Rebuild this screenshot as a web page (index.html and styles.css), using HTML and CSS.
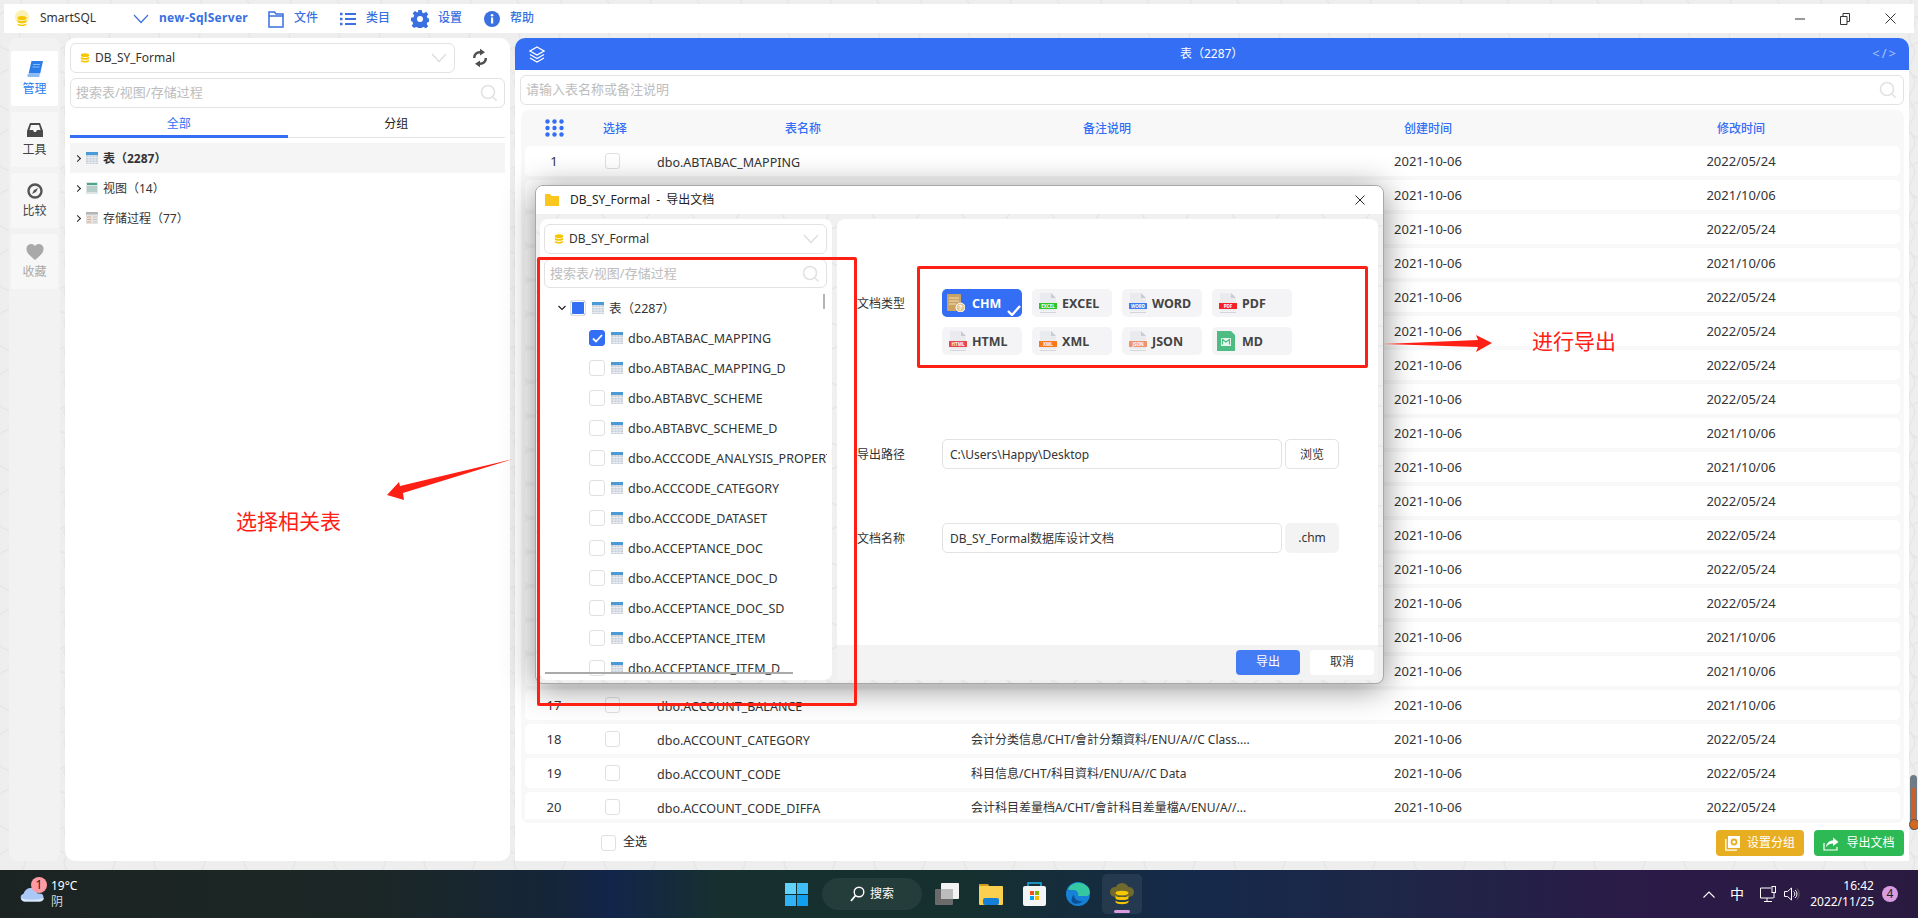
FILE: index.html
```html
<!DOCTYPE html>
<html lang="zh-CN">
<head>
<meta charset="utf-8">
<title>SmartSQL</title>
<link rel="stylesheet" href="styles.css">
</head>
<body>
<svg class="defs" width="0" height="0" aria-hidden="true">
  <defs>
    <symbol id="tbl" viewBox="0 0 12 12"><rect width="12" height="12" fill="#c8d0da"/><rect width="12" height="3" fill="#4a9ad6"/><path d="M0 5.500h12M0 8h12M0 10.500h12M3 3v9M6 3v9M9 3v9" stroke="#f2f4f6" stroke-width=".7"/></symbol>
    <symbol id="view" viewBox="0 0 12 12"><rect width="12" height="12" fill="#dfe5e5"/><rect x="1" y="1" width="10" height="2" fill="#4aa58a"/><path d="M1 5h10M1 7h10M1 9h10" stroke="#8fb8ac" stroke-width="1"/></symbol>
    <symbol id="proc" viewBox="0 0 12 12"><rect width="12" height="12" fill="#e4e4e4"/><rect width="12" height="2.500" fill="#b5b5b5"/><path d="M1 5h4M1 7.500h4M1 10h4" stroke="#e3a87c"/><path d="M7 5h4M7 7.500h4M7 10h4" stroke="#c9c9c9"/></symbol>
    <symbol id="db" viewBox="0 0 12 12"><ellipse cx="6" cy="2.600" rx="5" ry="2.200" fill="#f7c600"/><path d="M1 4.600c1 1.800 9 1.800 10 0v2.200c-1 1.800-9 1.800-10 0zM1 8.200c1 1.800 9 1.800 10 0v1.400c-1 2.400-9 2.400-10 0z" fill="#f7c600"/></symbol>
    <symbol id="chev" viewBox="0 0 16 10"><path d="M1 1l7 7.500L15 1" fill="none" stroke="currentColor" stroke-width="1.200"/></symbol>
    <symbol id="mag" viewBox="0 0 18 18"><circle cx="8" cy="8" r="6.500" fill="none" stroke="#e2e2e2" stroke-width="1.600"/><path d="M13 13l3.500 3.500" stroke="#e2e2e2" stroke-width="1.600"/></symbol>
    <symbol id="sheet" viewBox="0 0 22 22"><path d="M3 1h11l5 5v13H3z" fill="#e9ebef"/><path d="M14 1l5 5h-5z" fill="#c8ccd4"/><rect x="3" y="20" width="16" height="1" fill="#d4d6da"/></symbol>
  </defs>
</svg>

<header class="titlebar">
  <svg class="logo" width="16" height="18" viewBox="0 0 16 18"><circle cx="8" cy="7" r="7" fill="#fbf1b4"/><ellipse cx="8" cy="8" rx="4.500" ry="2" fill="#f7c600"/><path d="M3.500 10c1 1.500 8 1.500 9 0v2c-1 1.500-8 1.500-9 0zM3.500 13.500c1 1.500 8 1.500 9 0v1c-1 2-8 2-9 0z" fill="#f7c600"/></svg>
  <span class="app-name">SmartSQL</span>
  <svg class="t-chev" width="16" height="10"><use href="#chev"/></svg>
  <b class="conn">new-SqlServer</b>
  <nav class="menu">
    <svg class="mi" width="16" height="18" viewBox="0 0 16 18"><path d="M1 2h5.500l1.500 2h7v13H1zM1 6h14" fill="none" stroke="#3a70e0" stroke-width="1.500"/></svg><span class="ml">文件</span>
    <svg class="mi" width="16" height="14" viewBox="0 0 16 14"><path d="M0 2h2.500M0 7h2.500M0 12h2.500" stroke="#3a70e0" stroke-width="2.400"/><path d="M5 2h11M5 7h11M5 12h11" stroke="#3a70e0" stroke-width="2"/></svg><span class="ml">类目</span>
    <svg class="mi gear" width="18" height="18" viewBox="0 0 18 18"><path fill="#3a70e0" fill-rule="evenodd" d="M7.300 0h3.400l.5 2.600 1.700.7 2.200-1.500 2.100 2.500-1.400 2 .6 1.800 2.600.5v3.200l-2.600.5-.7 1.700 1.500 2.200-2.400 2.200-2.100-1.500-1.700.7-.5 2.600H7.300l-.5-2.600-1.700-.7L3 18 .7 15.700l1.500-2.200-.7-1.700L0 11V7.700l2.500-.5.700-1.700-1.500-2.200L4 1l2.200 1.500L7 2zM9 6a3 3 0 100 6 3 3 0 000-6z"/></svg><span class="ml">设置</span>
    <svg class="mi" width="16" height="16" viewBox="0 0 16 16"><circle cx="8" cy="8" r="8" fill="#3a70e0"/><rect x="7" y="6.500" width="2.200" height="6" fill="#fff"/><circle cx="8.100" cy="4.300" r="1.300" fill="#fff"/></svg><span class="ml">帮助</span>
  </nav>
  <div class="winctl">
    <svg width="10" height="10" viewBox="0 0 10 10"><path d="M0 5h10" stroke="#333"/></svg>
    <svg width="10" height="12" viewBox="0 0 10 12"><path d="M.5 3.500h6.500v8H.5zM3 3.500V.5h6.500v8H7" fill="none" stroke="#333"/></svg>
    <svg width="11" height="11" viewBox="0 0 11 11"><path d="M.5.500l10 10M10.500.500l-10 10" stroke="#333"/></svg>
  </div>
</header>

<main class="main">
  <aside class="rail">
    <div class="rail-item active">
      <svg viewBox="0 0 18 18"><path d="M5.500 1H17l-2.800 12.500H2.600z" fill="#2b7de9"/><path d="M2.600 14h11.200l-.5 3H3a1.500 1.500 0 01-.4-3z" fill="#8dbcf4"/><path d="M7 4.500h7M6.500 7h7" stroke="#8dbcf4"/></svg>
      <span>管理</span>
    </div>
    <div class="rail-item">
      <svg viewBox="0 0 18 18"><path d="M4 2h10l3 8v6H1v-6zM5 4 3.500 9H7l1 2h2l1-2h3.500L13 4z" fill="#4a4a4a" fill-rule="evenodd"/></svg>
      <span>工具</span>
    </div>
    <div class="rail-item">
      <svg viewBox="0 0 18 18"><circle cx="9" cy="9" r="6.500" fill="none" stroke="#555" stroke-width="2.400"/><path d="M12 6l-2 4-4 2 2-4z" fill="#555"/></svg>
      <span>比较</span>
    </div>
    <div class="rail-item muted">
      <svg viewBox="0 0 18 18"><path d="M9 17C3 12 .5 9.500.5 6a4.700 4.700 0 018.500-3 4.700 4.700 0 018.500 3c0 3.500-2.500 6-8.500 11z" fill="#a9a9a9"/></svg>
      <span>收藏</span>
    </div>
  </aside>

  <section class="side">
    <div class="side-top">
      <div class="select grow">
        <svg width="10" height="10"><use href="#db"/></svg><span>DB_SY_Formal</span>
        <svg class="sel-chev" width="16" height="10"><use href="#chev"/></svg>
      </div>
      <svg class="refresh" width="16" height="20" viewBox="0 0 16 20"><path d="M2.200 10C2 6.300 5 3.800 8.500 4.200M13.800 10c.2 3.700-2.800 6.200-6.300 5.800" fill="none" stroke="#4f4f4f" stroke-width="2.500"/><path d="M8 0.800l5 3.400-5 3.400zM8 12.400l-5 3.400 5 3.400z" fill="#4f4f4f"/></svg>
    </div>
    <div class="search"><span>搜索表/视图/存储过程</span><svg width="18" height="18"><use href="#mag"/></svg></div>
    <div class="tabs"><span class="tab on">全部</span><span class="tab">分组</span></div>
    <ul class="tree">
      <li class="tree-row hot"><i class="caret"></i><svg width="12" height="12"><use href="#tbl"/></svg><b>表（2287）</b></li>
      <li class="tree-row"><i class="caret"></i><svg width="12" height="12"><use href="#view"/></svg><span>视图（14）</span></li>
      <li class="tree-row"><i class="caret"></i><svg width="12" height="12"><use href="#proc"/></svg><span>存储过程（77）</span></li>
    </ul>
  </section>

  <section class="content">
    <div class="bluebar">
      <svg width="16" height="17" viewBox="0 0 16 17"><path d="M8 1l7 4-7 4-7-4zM1 8.500l7 4 7-4M1 12l7 4 7-4" fill="none" stroke="#fff" stroke-width="1.300"/></svg>
      <span class="bar-title">表（2287）</span>
      <span class="bar-code">&lt;/&gt;</span>
    </div>
    <div class="search table-search"><span>请输入表名称或备注说明</span><svg width="18" height="18"><use href="#mag"/></svg></div>
    <div class="table">
      <div class="thead">
        <svg class="dots" width="19" height="18" viewBox="0 0 19 18"><g fill="#336ef5"><circle cx="2.500" cy="2.500" r="2.200"/><circle cx="9.500" cy="2.500" r="2.200"/><circle cx="16.500" cy="2.500" r="2.200"/><circle cx="2.500" cy="9" r="2.200"/><circle cx="9.500" cy="9" r="2.200"/><circle cx="16.500" cy="9" r="2.200"/><circle cx="2.500" cy="15.500" r="2.200"/><circle cx="9.500" cy="15.500" r="2.200"/><circle cx="16.500" cy="15.500" r="2.200"/></g></svg>
        <span>选择</span><span>表名称</span><span>备注说明</span><span>创建时间</span><span>修改时间</span>
      </div>
      <div class="rows">
        <div class="row"><span>1</span><i class="cb"></i><span class="name">dbo.ABTABAC_MAPPING</span><span class="note"></span><span>2021-10-06</span><span>2022/05/24</span></div>
        <div class="row"><span>2</span><i class="cb"></i><span class="name"></span><span class="note"></span><span>2021-10-06</span><span>2021/10/06</span></div>
        <div class="row"><span>3</span><i class="cb"></i><span class="name"></span><span class="note"></span><span>2021-10-06</span><span>2022/05/24</span></div>
        <div class="row"><span>4</span><i class="cb"></i><span class="name"></span><span class="note"></span><span>2021-10-06</span><span>2021/10/06</span></div>
        <div class="row"><span>5</span><i class="cb"></i><span class="name"></span><span class="note"></span><span>2021-10-06</span><span>2022/05/24</span></div>
        <div class="row"><span>6</span><i class="cb"></i><span class="name"></span><span class="note"></span><span>2021-10-06</span><span>2022/05/24</span></div>
        <div class="row"><span>7</span><i class="cb"></i><span class="name"></span><span class="note"></span><span>2021-10-06</span><span>2022/05/24</span></div>
        <div class="row"><span>8</span><i class="cb"></i><span class="name"></span><span class="note"></span><span>2021-10-06</span><span>2022/05/24</span></div>
        <div class="row"><span>9</span><i class="cb"></i><span class="name"></span><span class="note"></span><span>2021-10-06</span><span>2021/10/06</span></div>
        <div class="row"><span>10</span><i class="cb"></i><span class="name"></span><span class="note"></span><span>2021-10-06</span><span>2021/10/06</span></div>
        <div class="row"><span>11</span><i class="cb"></i><span class="name"></span><span class="note"></span><span>2021-10-06</span><span>2022/05/24</span></div>
        <div class="row"><span>12</span><i class="cb"></i><span class="name"></span><span class="note"></span><span>2021-10-06</span><span>2022/05/24</span></div>
        <div class="row"><span>13</span><i class="cb"></i><span class="name"></span><span class="note"></span><span>2021-10-06</span><span>2022/05/24</span></div>
        <div class="row"><span>14</span><i class="cb"></i><span class="name"></span><span class="note"></span><span>2021-10-06</span><span>2022/05/24</span></div>
        <div class="row"><span>15</span><i class="cb"></i><span class="name"></span><span class="note"></span><span>2021-10-06</span><span>2021/10/06</span></div>
        <div class="row"><span>16</span><i class="cb"></i><span class="name"></span><span class="note"></span><span>2021-10-06</span><span>2021/10/06</span></div>
        <div class="row"><span>17</span><i class="cb"></i><span class="name">dbo.ACCOUNT_BALANCE</span><span class="note"></span><span>2021-10-06</span><span>2021/10/06</span></div>
        <div class="row"><span>18</span><i class="cb"></i><span class="name">dbo.ACCOUNT_CATEGORY</span><span class="note">会计分类信息/CHT/會計分類資料/ENU/A//C Class....</span><span>2021-10-06</span><span>2022/05/24</span></div>
        <div class="row"><span>19</span><i class="cb"></i><span class="name">dbo.ACCOUNT_CODE</span><span class="note">科目信息/CHT/科目資料/ENU/A//C Data</span><span>2021-10-06</span><span>2022/05/24</span></div>
        <div class="row"><span>20</span><i class="cb"></i><span class="name">dbo.ACCOUNT_CODE_DIFFA</span><span class="note">会计科目差量档A/CHT/會計科目差量檔A/ENU/A//...</span><span>2021-10-06</span><span>2022/05/24</span></div>
      </div>
    </div>
    <div class="foot">
      <i class="cb"></i><span class="all">全选</span>
      <button class="act amber"><svg width="15" height="15" viewBox="0 0 15 15"><path d="M.8 3v11.200H12" fill="none" stroke="#fff" stroke-width="1.300"/><rect x="3" y="0" width="12" height="12" fill="#fff"/><circle cx="9" cy="6" r="2.500" fill="none" stroke="#e8ae22" stroke-width="1.800"/></svg>设置分组</button>
      <button class="act green"><svg width="16" height="15" viewBox="0 0 16 15"><path d="M1 7v7h13v-3" fill="none" stroke="#fff" stroke-width="1.200"/><path d="M3 11c.5-4 3.500-6.500 7-6.500V1.500L15.500 6 10 10V7.500C7 7.500 5 8.500 3 11z" fill="#fff"/></svg>导出文档</button>
    </div>
  </section>
</main>

<footer class="taskbar">
  <div class="tb-left">
    <div class="weather-icon">
      <svg width="25" height="15" viewBox="0 0 25 15"><path d="M4.500 14.500a4 4 0 01-1-7.800C5 2 9.500 0 13 1.500c2.500 1 4 3 4.500 5h2a4 4 0 010 8z" fill="#a9c8f5"/><path d="M1 11c5 2 16 2 23 0-.5 2-2 3.500-4.500 3.500h-15C3 14.500 1.500 13 1 11z" fill="#dbe8fc"/></svg>
      <b class="pill-badge">1</b>
    </div>
    <div class="weather-text"><span>19°C</span><span class="dim">阴</span></div>
  </div>
  <div class="tb-center">
    <svg width="23" height="23" viewBox="0 0 23 23"><path d="M0 0h11v11H0z" fill="#63d2fb"/><path d="M12 0h11v11H12z" fill="#3fbdf8"/><path d="M0 12h11v11H0z" fill="#2fb2f6"/><path d="M12 12h11v11H12z" fill="#109eef"/></svg>
    <div class="tb-search"><svg width="15" height="16" viewBox="0 0 15 16"><circle cx="9" cy="6" r="4.800" fill="none" stroke="#fff" stroke-width="1.400"/><path d="M5.500 9.500 1 15" stroke="#fff" stroke-width="1.800"/></svg><span>搜索</span></div>
    <svg class="ti" width="24" height="22" viewBox="0 0 24 22"><rect x="6" width="18" height="16" rx="1" fill="#f3f3f3"/><rect y="6" width="18" height="16" rx="1" fill="#6b6b6b"/><rect x="6" y="6" width="12" height="10" fill="#bdbdbd"/></svg>
    <svg class="ti" width="24" height="22" viewBox="0 0 24 22"><path d="M0 1h9l2 3H0z" fill="#d19c1a"/><rect y="3" width="24" height="19" rx="1" fill="#fbd04e"/><rect x="4" y="15" width="16" height="7" rx="2" fill="#1680d8"/></svg>
    <svg class="ti" width="23" height="24" viewBox="0 0 23 24"><path d="M5 5V1h13v4" fill="none" stroke="#1eb0ec" stroke-width="1.500"/><rect y="4" width="23" height="20" rx="2" fill="#f3f4f4"/><rect x="7" y="9" width="4" height="4" fill="#f25022"/><rect x="12" y="9" width="4" height="4" fill="#7fba00"/><rect x="7" y="14" width="4" height="4" fill="#00a4ef"/><rect x="12" y="14" width="4" height="4" fill="#ffb900"/></svg>
    <svg class="ti" width="24" height="24" viewBox="0 0 24 24"><circle cx="12" cy="12" r="12" fill="#1681d6"/><path d="M2 7C5 0 16-2 22 5c3 4 2 9-1 9H12c1-3-1-6-5-6-2 0-4 0-5-1z" fill="#35c6a2"/><path d="M8 13c0 4 4 7 9 6-3 3-8 4-11 1-1-2 0-6 2-7z" fill="#0c4f96"/></svg>
    <div class="tile">
      <svg width="24" height="24" viewBox="0 0 24 24"><circle cx="12" cy="8" r="7" fill="#716a2d"/><ellipse cx="5" cy="10" rx="5" ry="5" fill="#716a2d"/><ellipse cx="19" cy="10" rx="5" ry="5" fill="#716a2d"/><ellipse cx="12" cy="11" rx="6.500" ry="2.300" fill="#f7c600"/><path d="M5.500 13.500c1 2 12 2 13 0v3c-1 2-12 2-13 0zM5.500 18.500c1 2 12 2 13 0v1.500c-1 3-12 3-13 0z" fill="#f7c600"/></svg>
      <i class="tile-mark"></i>
    </div>
  </div>
  <div class="tb-right">
    <svg width="12" height="7" viewBox="0 0 12 7"><path d="M.5 6.500 6 1l5.500 5.500" fill="none" stroke="#fff" stroke-width="1.100"/></svg>
    <span class="ime">中</span>
    <svg width="17" height="17" viewBox="0 0 17 17"><path d="M11 2H.5v10h13" fill="none" stroke="#fff"/><path d="M4 15.500h8M7 12v3.500" stroke="#fff"/><rect x="12" y=".5" width="3.500" height="6" fill="none" stroke="#fff"/><path d="M14 7v5" stroke="#fff"/></svg>
    <svg width="16" height="14" viewBox="0 0 16 14"><path d="M.5 4.500h3l4-3.500v12l-4-3.500h-3z" fill="none" stroke="#fff"/><path d="M9.500 4.500a3 3 0 010 5M11 3a5 5 0 010 8" fill="none" stroke="#fff"/><path d="M13 1.500a8 8 0 010 11" fill="none" stroke="#666"/></svg>
    <div class="clock"><span>16:42</span><span>2022/11/25</span></div>
    <b class="pill-badge tray">4</b>
  </div>
</footer>

<div class="gauge"><i></i></div>

<section class="dialog">
  <div class="dlg-title">
    <svg width="14" height="12" viewBox="0 0 14 12"><path d="M0 0h5l1.500 2H14v10H0z" fill="#fbc71f"/></svg>
    <span class="dlg-name">DB_SY_Formal - 导出文档</span>
    <svg class="dlg-x" width="10" height="10" viewBox="0 0 10 10"><path d="M.5.500l9 9M9.500.500l-9 9" stroke="#222"/></svg>
  </div>
  <div class="dlg-body">
    <div class="picker">
      <div class="select">
        <svg width="10" height="10"><use href="#db"/></svg><span>DB_SY_Formal</span>
        <svg class="sel-chev" width="16" height="10"><use href="#chev"/></svg>
      </div>
      <div class="search"><span>搜索表/视图/存储过程</span><svg width="18" height="18"><use href="#mag"/></svg></div>
      <ul class="dlg-tree">
        <li class="dt-root"><svg class="open" width="8" height="6" viewBox="0 0 8 6"><path d="M.5 1 4 4.500 7.500 1" fill="none" stroke="#222" stroke-width="1.200"/></svg><i class="cb half"></i><svg width="12" height="12"><use href="#tbl"/></svg><span>表（2287）</span></li>
        <li class="dt-leaf"><i class="cb on"><svg width="11" height="9" viewBox="0 0 11 9"><path d="M1 4.500 4 7.500 10 1" fill="none" stroke="#fff" stroke-width="1.800"/></svg></i><svg width="12" height="12"><use href="#tbl"/></svg><span>dbo.ABTABAC_MAPPING</span></li>
        <li class="dt-leaf"><i class="cb"></i><svg width="12" height="12"><use href="#tbl"/></svg><span>dbo.ABTABAC_MAPPING_D</span></li>
        <li class="dt-leaf"><i class="cb"></i><svg width="12" height="12"><use href="#tbl"/></svg><span>dbo.ABTABVC_SCHEME</span></li>
        <li class="dt-leaf"><i class="cb"></i><svg width="12" height="12"><use href="#tbl"/></svg><span>dbo.ABTABVC_SCHEME_D</span></li>
        <li class="dt-leaf"><i class="cb"></i><svg width="12" height="12"><use href="#tbl"/></svg><span>dbo.ACCCODE_ANALYSIS_PROPERTY</span></li>
        <li class="dt-leaf"><i class="cb"></i><svg width="12" height="12"><use href="#tbl"/></svg><span>dbo.ACCCODE_CATEGORY</span></li>
        <li class="dt-leaf"><i class="cb"></i><svg width="12" height="12"><use href="#tbl"/></svg><span>dbo.ACCCODE_DATASET</span></li>
        <li class="dt-leaf"><i class="cb"></i><svg width="12" height="12"><use href="#tbl"/></svg><span>dbo.ACCEPTANCE_DOC</span></li>
        <li class="dt-leaf"><i class="cb"></i><svg width="12" height="12"><use href="#tbl"/></svg><span>dbo.ACCEPTANCE_DOC_D</span></li>
        <li class="dt-leaf"><i class="cb"></i><svg width="12" height="12"><use href="#tbl"/></svg><span>dbo.ACCEPTANCE_DOC_SD</span></li>
        <li class="dt-leaf"><i class="cb"></i><svg width="12" height="12"><use href="#tbl"/></svg><span>dbo.ACCEPTANCE_ITEM</span></li>
        <li class="dt-leaf"><i class="cb"></i><svg width="12" height="12"><use href="#tbl"/></svg><span>dbo.ACCEPTANCE_ITEM_D</span></li>
        <li class="scroll-v"></li>
        <li class="scroll-h"></li>
      </ul>
    </div>
    <div class="form-col">
      <div class="form">
        <div class="f-row first">
          <label class="f-label">文档类型</label>
          <div class="types">
            <div class="type sel">
              <svg width="18" height="18" viewBox="0 0 18 18"><rect x="0" width="14" height="17" rx="1" fill="#c9a264"/><path d="M2 4h10M2 7h10M2 10h7" stroke="#f1deb9"/><circle cx="13.500" cy="13.500" r="4.500" fill="#e8c98f" stroke="#fff"/><text x="11.800" y="16" class="qm">?</text></svg>
              <b>CHM</b>
              <svg class="tick" width="14" height="11" viewBox="0 0 14 11"><path d="M1 6l4 4 8-9" fill="none" stroke="#fff" stroke-width="2.400"/></svg>
            </div>
            <div class="type"><span class="doc"><svg width="22" height="22"><use href="#sheet"/></svg><em class="band g">EXCEL</em></span><b>EXCEL</b></div>
            <div class="type"><span class="doc"><svg width="22" height="22"><use href="#sheet"/></svg><em class="band b">WORD</em></span><b>WORD</b></div>
            <div class="type"><span class="doc"><svg width="22" height="22"><use href="#sheet"/></svg><em class="band r">PDF</em></span><b>PDF</b></div>
            <div class="type"><span class="doc"><svg width="22" height="22"><use href="#sheet"/></svg><em class="band h">HTML</em></span><b>HTML</b></div>
            <div class="type"><span class="doc"><svg width="22" height="22"><use href="#sheet"/></svg><em class="band o">XML</em></span><b>XML</b></div>
            <div class="type"><span class="doc"><svg width="22" height="22"><use href="#sheet"/></svg><em class="band j">JSON</em></span><b>JSON</b></div>
            <div class="type"><svg width="18" height="20" viewBox="0 0 18 20"><path d="M0 0h14l4 4v16H0z" fill="#4fbc83"/><path d="M4 7h10v8H4z" fill="#e6f6ee"/><path d="M5.500 13.500v-5L9 11l3.500-2.500v5" fill="none" stroke="#4fbc83" stroke-width="1.200"/></svg><b class="md">MD</b></div>
          </div>
        </div>
        <div class="f-row path">
          <label class="f-label">导出路径</label>
          <div class="f-field"><div class="input">C:\Users\Happy\Desktop</div><button class="addon btn-b">浏览</button></div>
        </div>
        <div class="f-row fname">
          <label class="f-label">文档名称</label>
          <div class="f-field"><div class="input">DB_SY_Formal数据库设计文档</div><span class="addon ext">.chm</span></div>
        </div>
      </div>
      <div class="dlg-foot"><button class="primary">导出</button><button class="ghost">取消</button></div>
    </div>
  </div>
</section>

<div class="redbox box-list"></div>
<div class="redbox box-types"></div>
<svg class="arrows" width="1918" height="918" viewBox="0 0 1918 918" aria-hidden="true">
  <path d="M513 459 403 493 404 500 387 495 399 482 400 486z" fill="#ff2015"/>
  <path d="M1383 344 1478 340 1476 335 1492 343 1476 352 1478 347z" fill="#ff2015"/>
</svg>
<span class="note-red n-left">选择相关表</span>
<span class="note-red n-right">进行导出</span>
</body>
</html>
```
FILE: styles.css
```css
* { box-sizing: border-box; }
html, body { margin: 0; padding: 0; }
body {
  position: relative;
  width: 1918px;
  height: 918px;
  overflow: hidden;
  display: flex;
  flex-direction: column;
  font: 12px/1.2 "Noto Sans", "Noto Sans CJK SC", sans-serif;
  color: #222;
  background-color: #eeeeee;
  background-image: url("data:image/svg+xml,%3Csvg xmlns='http://www.w3.org/2000/svg' width='90' height='60'%3E%3Cpath d='M0 15c15-18 30 18 45 0s30 18 45 0M0 45c15 18 30-18 45 0s30-18 45 0M22 0c-10 15 10 15 0 30s10 15 0 30M67 0c10 15-10 15 0 30s-10 15 0 30' fill='none' stroke='%23e6e6e6' stroke-width='1.500'/%3E%3C/svg%3E");
}
.defs { position: absolute; }
ul { list-style: none; margin: 0; padding: 0; }
button { font: inherit; border: 0; padding: 0; }
svg { display: block; flex: none; }

/* title bar */
.titlebar {
  flex: none;
  height: 29px;
  margin: 4px 4px 0;
  background: #fff;
  display: flex;
  align-items: center;
  padding-left: 10px;
}
.app-name { margin-left: 10px; width: 57px; color: #333; }
.t-chev { margin-left: 36px; color: #3a70e0; }
.conn { margin-left: 10px; width: 89px; color: #3a70e0; font-size: 12px; letter-spacing: .3px; white-space: nowrap; }
.menu { display: flex; align-items: center; margin-left: 20px; }
.mi { margin-right: 10px; }
.gear { margin: 0 9px 0 -1px; }
.ml { color: #3a70e0; font-weight: 500; margin-right: 22px; width: 24px; }
.winctl { margin-left: auto; display: flex; align-items: center; gap: 35px; padding-right: 18px; }

/* layout */
.main {
  flex: none;
  height: 823px;
  margin-top: 5px;
  padding: 0 9px;
  display: flex;
  gap: 5px;
}
.rail {
  flex: none;
  width: 51px;
  padding: 13px 2px 0;
  background: #f2f2f2;
  border-radius: 8px;
  display: flex;
  flex-direction: column;
  gap: 6px;
}
.rail-item {
  flex: none;
  height: 55px;
  padding-top: 9px;
  background: #f7f7f7;
  display: flex;
  flex-direction: column;
  align-items: center;
  gap: 4px;
  color: #444;
  border-radius: 2px;
}
.rail-item svg { width: 18px; height: 18px; }
.rail-item.active { background: #fff; color: #2b7de9; }
.rail-item.muted { color: #aaa; }

.side {
  flex: none;
  width: 445px;
  background: #fff;
  border-radius: 10px;
  padding: 5px;
  display: flex;
  flex-direction: column;
  gap: 5px;
}
.side-top { display: flex; align-items: center; }
.refresh { margin: 0 17px; }
.grow { flex: 1; }
.select {
  height: 30px;
  display: flex;
  align-items: center;
  gap: 5px;
  padding: 0 7px 0 9px;
  border: 1px solid #e2e2e2;
  border-radius: 6px;
  color: #333;
  background: #fff;
}
.sel-chev { margin-left: auto; color: #dcdcdc; }
.search {
  height: 30px;
  display: flex;
  align-items: center;
  justify-content: space-between;
  padding: 0 6px 0 5px;
  border: 1px solid #e2e2e2;
  border-radius: 6px;
  background: #fff;
  color: #bdbdbd;
  font-size: 13px;
}
.tabs {
  display: flex;
  height: 30px;
  margin-top: -5px;
  border-bottom: 1px solid #e4e4e4;
  padding-top: 2px;
}
.tab { flex: 1; text-align: center; line-height: 28px; }
.tab.on { color: #336ef5; box-shadow: inset 0 -3px 0 #336ef5; height: 28px; }
.tree-row {
  height: 30px;
  display: flex;
  align-items: center;
  padding-left: 5px;
  color: #333;
}
.tree-row b, .tree-row span { padding-top: 2px; }
.tree-row.hot { background: #f5f5f5; }
.tree-row svg { margin-right: 5px; }
.caret {
  width: 5px;
  height: 5px;
  margin-right: 6px;
  border-top: 1.300px solid #222;
  border-right: 1.300px solid #222;
  transform: rotate(45deg);
}

.content {
  flex: 1;
  min-width: 0;
  background: #fff;
  border-radius: 10px 10px 0 0;
  display: flex;
  flex-direction: column;
}
.bluebar {
  flex: none;
  height: 32px;
  background: #336ef5;
  border-radius: 10px 10px 0 0;
  display: flex;
  align-items: center;
  padding: 0 11px 0 14px;
  color: #fff;
}
.bar-title { flex: 1; text-align: center; padding-left: 6px; }
.bar-code { color: #a9c3fb; font-size: 13px; letter-spacing: 2px; }
.table-search { margin: 5px 5px 0; flex: none; }
.table {
  flex: none;
  height: 713px;
  margin: 5px 5px 0 6px;
  padding: 0 4px 4px;
  background: #f8f8f8;
  border-radius: 8px;
  display: flex;
  flex-direction: column;
}
.thead, .row {
  display: grid;
  grid-template-columns: 58px 64px 312px 296px 346px 280px 18px;
  align-items: center;
}
.thead { flex: none; height: 36px; text-align: center; color: #336ef5; font-weight: 500; }
.thead span, .row span { padding-top: 2px; }
.dots { justify-self: center; }
.rows {
  flex: 1;
  min-height: 0;
  overflow: hidden;
  display: flex;
  flex-direction: column;
  gap: 4px;
}
.row {
  flex: none;
  height: 30px;
  background: #fff;
  border-radius: 5px;
  text-align: center;
  font-size: 13px;
  color: #333;
}
.row .cb { margin-left: 22px; }
.name { text-align: left; padding-left: 10px; font-size: 12.5px; }
.note { text-align: left; padding-left: 12px; font-size: 12px; white-space: nowrap; }
.cb {
  display: block;
  flex: none;
  width: 15px;
  height: 16px;
  background: #fff;
  border: 1px solid #e0e0e0;
  border-radius: 3px;
}
.foot {
  flex: none;
  height: 38px;
  display: flex;
  align-items: flex-start;
  padding: 7px 5px 0 86px;
}
.foot .cb { margin-top: 5px; }
.all { margin: 5px 0 0 7px; }
.act {
  height: 26px;
  width: 88px;
  display: flex;
  align-items: center;
  justify-content: center;
  gap: 7px;
  border-radius: 4px;
  color: #fff;
}
.amber { background: #e8ae22; margin-left: auto; }
.green { background: #2dba55; width: 90px; margin-left: 10px; }

/* taskbar */
.taskbar {
  flex: none;
  height: 48px;
  margin-top: 9px;
  display: flex;
  align-items: center;
  color: #fff;
  background: linear-gradient(90deg, #1c2423 0, #1b2726 380px, #15253a 560px, #12254a 610px, #17302f 720px, #15302f 960px, #15294a 1190px, #1e2647 1400px, #2b1a47 1650px, #2b1a40 100%);
}
.tb-left { flex: none; width: 785px; display: flex; align-items: center; padding-left: 20px; }
.weather-icon { position: relative; width: 31px; height: 34px; padding-top: 10px; }
.pill-badge {
  display: flex;
  align-items: center;
  justify-content: center;
  width: 16px;
  height: 16px;
  border-radius: 50%;
  font-weight: 400;
  color: #222;
}
.weather-icon .pill-badge { position: absolute; left: 11px; top: 0; background: #ff9aa5; }
.weather-text { display: flex; flex-direction: column; gap: 2px; }
.dim { color: #d8d8d8; }
.tb-center { display: flex; align-items: center; }
.tb-search {
  width: 100px;
  height: 32px;
  margin: 0 13px 0 14px;
  border-radius: 16px;
  background: #243d3a;
  display: flex;
  align-items: center;
  justify-content: center;
  gap: 5px;
  font-size: 12px;
}
.ti { margin-right: 20px; }
.tile {
  position: relative;
  width: 40px;
  height: 40px;
  margin-left: -8px;
  background: rgba(255, 255, 255, .07);
  border-radius: 5px;
  display: flex;
  align-items: center;
  justify-content: center;
}
.tile-mark {
  position: absolute;
  left: 12px;
  bottom: 1px;
  width: 16px;
  height: 3px;
  background: #d99ce0;
  border-radius: 2px;
}
.tb-right { margin-left: auto; display: flex; align-items: center; padding-right: 20px; }
.ime { margin: 0 16px 0 15px; font-size: 14px; }
.tb-right svg + svg { margin-left: 7px; }
.clock { width: 74px; display: flex; flex-direction: column; align-items: flex-end; gap: 2px; font-size: 12px; }
.pill-badge.tray { background: #d99ce0; margin-left: 8px; }

.gauge {
  position: absolute;
  left: 1910px;
  top: 775px;
  width: 7px;
  height: 55px;
  background: #6d7c87;
  border-radius: 4px;
}
.gauge i {
  position: absolute;
  left: 2px;
  top: 13px;
  width: 3px;
  height: 36px;
  background: #c9622a;
}
.gauge::after {
  content: "";
  position: absolute;
  left: -1px;
  bottom: 0;
  width: 9px;
  height: 9px;
  border-radius: 50%;
  background: #d2691e;
  border: 1px solid #556;
}

/* dialog */
.dialog {
  position: absolute;
  left: 535px;
  top: 185px;
  width: 849px;
  height: 499px;
  border: 1px solid #a8a8a8;
  border-radius: 8px;
  box-shadow: 0 4px 32px rgba(0, 0, 0, .45);
  background-color: #f0f0f0;
  background-image: inherit;
  display: flex;
  flex-direction: column;
  overflow: hidden;
}
.dlg-title {
  flex: none;
  height: 28px;
  background: #fff;
  display: flex;
  align-items: center;
  gap: 11px;
  padding: 0 18px 0 9px;
}
.dlg-name { word-spacing: 3px; }
.dlg-x { margin-left: auto; }
.dlg-body {
  flex: 1;
  min-height: 0;
  display: flex;
  gap: 5px;
  padding: 5px 5px 3px 4px;
}
.picker {
  flex: none;
  width: 292px;
  background: #fff;
  border-radius: 8px;
  padding: 5px 5px 0 4px;
  display: flex;
  flex-direction: column;
  gap: 5px;
  overflow: hidden;
}
.picker .search { height: 29px; flex: none; }
.picker .select { flex: none; }
.dlg-tree {
  position: relative;
  flex: 1;
  min-height: 0;
  overflow: hidden;
  white-space: nowrap;
  font-size: 12.5px;
  color: #333;
}
.dt-root, .dt-leaf {
  height: 30px;
  display: flex;
  align-items: center;
}
.dt-root { padding-left: 14px; }
.dt-leaf { padding-left: 45px; }
.dt-root .open { margin-right: 4px; }
.dt-root svg:not(.open), .dt-leaf > svg { margin: 0 5px 0 6px; }
.dlg-tree .cb { width: 16px; height: 16px; }
.cb.half { background: #336ef5; box-shadow: inset 0 0 0 1px #fff; }
.cb.on {
  background: #336ef5;
  border-color: #336ef5;
  display: flex;
  align-items: center;
  justify-content: center;
}
.scroll-v {
  position: absolute;
  right: 2px;
  top: 1px;
  width: 2px;
  height: 15px;
  background: #b5b5b5;
}
.scroll-h {
  position: absolute;
  left: 1px;
  top: 379px;
  width: 248px;
  height: 2px;
  background: #aaa;
}
.form-col { flex: 1; min-width: 0; display: flex; flex-direction: column; }
.form {
  flex: 1;
  min-height: 0;
  background: #fff;
  border-radius: 8px 8px 0 0;
  padding: 70px 0 0 20px;
}
.f-row { display: flex; }
.f-label { width: 85px; flex: none; line-height: 31px; color: #333; }
.first .f-label { line-height: 29px; }
.path { margin-top: 84px; }
.fname { margin-top: 53px; }
.types {
  display: grid;
  grid-template-columns: repeat(4, 80px);
  grid-auto-rows: 28px;
  gap: 10px;
}
.type {
  position: relative;
  display: flex;
  align-items: center;
  background: #f4f4f6;
  border-radius: 5px;
  padding-left: 5px;
}
.type b { margin-left: 3px; font-size: 12.5px; color: #444; }
.type .md { margin-left: 7px; }
.type.sel { background: #336ef5; overflow: hidden; }
.type.sel b { color: #fff; margin-left: 7px; }
.qm { font-size: 7px; fill: #fff; font-weight: 700; }
.tick { position: absolute; right: 1px; bottom: 1px; }
.doc { position: relative; width: 22px; height: 22px; flex: none; }
.band {
  position: absolute;
  left: 2px;
  top: 11px;
  width: 18px;
  height: 6px;
  font: 700 4.500px/6px "Noto Sans", sans-serif;
  color: #fff;
  text-align: center;
  overflow: hidden;
}
.g { background: #2cc52c; }
.b { background: #3f7bee; }
.r { background: #f5202a; }
.h { background: #e8474d; }
.o { background: #f97a1b; }
.j { background: #ef9368; }
.f-field { display: flex; gap: 3px; }
.input {
  width: 340px;
  height: 30px;
  border: 1px solid #e2e2e2;
  border-radius: 5px;
  line-height: 29px;
  padding-left: 7px;
  color: #333;
}
.addon { width: 54px; height: 30px; border-radius: 5px; text-align: center; line-height: 29px; color: #333; }
.btn-b { background: #fff; border: 1px solid #e2e2e2; }
.ext { background: #f3f3f3; }
.dlg-foot {
  flex: none;
  height: 35px;
  background: #f3f3f3;
  display: flex;
  gap: 10px;
  justify-content: flex-end;
  padding: 5px 4px 0 0;
}
.primary, .ghost { width: 64px; height: 25px; border-radius: 4px; }
.primary { background: #447cf5; color: #fff; }
.ghost { background: #fff; color: #333; }

/* annotations */
.redbox { position: absolute; border: 3px solid #ff2015; border-radius: 2px; }
.box-list { left: 537px; top: 257px; width: 320px; height: 449px; }
.box-types { left: 917px; top: 266px; width: 451px; height: 102px; }
.arrows { position: absolute; left: 0; top: 0; pointer-events: none; }
.note-red { position: absolute; color: #ff2015; font-size: 21px; line-height: 26px; white-space: nowrap; }
.n-left { left: 236px; top: 508px; }
.n-right { left: 1532px; top: 328px; }
```
